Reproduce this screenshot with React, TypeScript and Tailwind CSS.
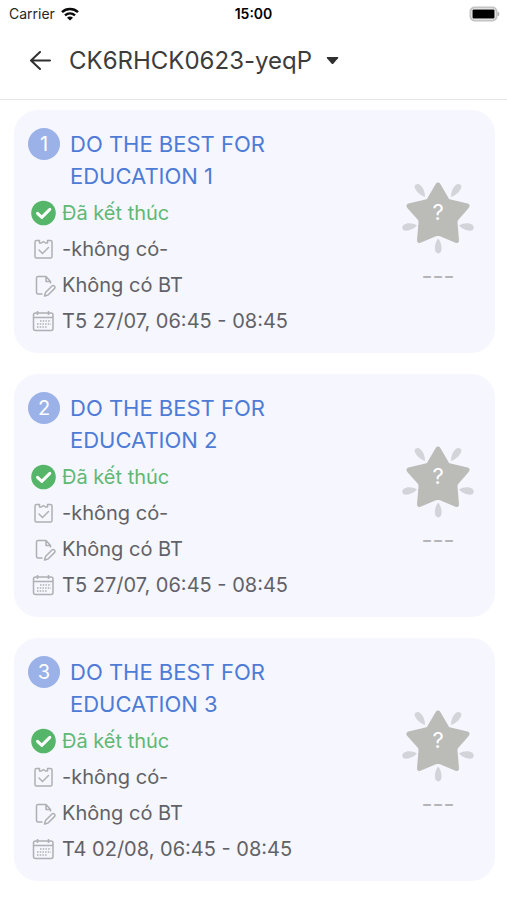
import { ReactNode } from "react";

type Lesson = {
  order: number;
  title: string;
  status: string;
  test: string;
  homework: string;
  time: string;
};

const lessons: Lesson[] = [
  { order: 1, title: "DO THE BEST FOR EDUCATION 1", status: "Đã kết thúc", test: "-không có-", homework: "Không có BT", time: "T5 27/07, 06:45 - 08:45" },
  { order: 2, title: "DO THE BEST FOR EDUCATION 2", status: "Đã kết thúc", test: "-không có-", homework: "Không có BT", time: "T5 27/07, 06:45 - 08:45" },
  { order: 3, title: "DO THE BEST FOR EDUCATION 3", status: "Đã kết thúc", test: "-không có-", homework: "Không có BT", time: "T4 02/08, 06:45 - 08:45" },
];

function WifiIcon() {
  return (
    <svg width="18" height="14" viewBox="0 0 18 14" fill="none" stroke="#0a0a0a" strokeWidth="2.5" aria-hidden="true">
      <path d="M1 5.2C5.5 1 12.5 1 17 5.2" />
      <path d="M4 8.4C7 5.7 11 5.7 14 8.4" />
      <path d="M9 13.6L6 10.7C7.8 9.2 10.2 9.2 12 10.7Z" fill="#0a0a0a" stroke="none" />
    </svg>
  );
}

function BatteryIcon() {
  return (
    <svg width="32" height="16" viewBox="0 0 32 16" aria-hidden="true">
      <rect x="2.5" y="1.5" width="26" height="13" rx="4" fill="#fff" stroke="#c4c4c4" strokeWidth="2" />
      <rect x="4.5" y="3.5" width="22" height="9" rx="1" fill="#000" />
      <path d="M29.500 5.500C32 6.500 32 9.500 29.500 10.500Z" fill="#b0b0b0" />
    </svg>
  );
}

function BackIcon() {
  return (
    <svg width="22" height="20" viewBox="0 0 22 20" fill="none" stroke="#303030" strokeWidth="2" strokeLinecap="round" strokeLinejoin="round" aria-hidden="true">
      <path d="M21 9.500H2M11 1L2 9.500L11 18" />
    </svg>
  );
}

function DoneIcon() {
  return (
    <svg width="26" height="26" viewBox="0 0 26 26" fill="none" aria-hidden="true">
      <circle cx="13.500" cy="13" r="12.300" fill="#55b568" />
      <path d="M7.500 13.300L11.800 17.400L19.800 9.400" stroke="#fff" strokeWidth="3" strokeLinecap="round" strokeLinejoin="round" />
    </svg>
  );
}

function TestIcon() {
  return (
    <svg width="26" height="26" viewBox="0 0 26 26" fill="none" stroke="#b0b0b3" strokeWidth="1.500" strokeLinecap="round" strokeLinejoin="round" aria-hidden="true">
      <path d="M9.500 4.500H6.500Q5 4.500 5 6V20.500Q5 22 6.500 22H20.500Q22 22 22 20.500V6Q22 4.500 20.500 4.500H17.500V7H15.500L13.500 5.500L11.500 7H9.500Z" />
      <path d="M9 14L12.500 17.500L18.500 11.500" />
    </svg>
  );
}

function HomeworkIcon() {
  return (
    <svg width="26" height="26" viewBox="0 0 26 26" fill="none" stroke="#b0b0b3" strokeWidth="1.500" strokeLinecap="round" strokeLinejoin="round" aria-hidden="true">
      <path d="M12 22H8Q6.500 22 6.500 20.500V6Q6.500 4.500 8 4.500H16L20.500 9.500V11M16 4.500V9.500H20.500" />
      <path d="M14.500 24L15.500 20.500L22 14Q23.500 13 24.500 14.200Q25.500 15.400 24.500 16.600L18 23Z" />
    </svg>
  );
}

function CalendarIcon() {
  return (
    <svg width="26" height="26" viewBox="0 0 26 26" fill="none" stroke="#b0b0b3" strokeWidth="1.500" aria-hidden="true">
      <rect x="3.500" y="5" width="19.500" height="17.500" rx="2" />
      <path d="M3.500 9.500H23M7.500 3V7M18.500 3V7" />
      <path d="M10 13H21M7 16H21M7 19H17" strokeWidth="1.500" strokeDasharray="1.500 1.200" />
    </svg>
  );
}

function StarBadge() {
  return (
    <div className="relative h-[76px] w-[76px]">
      <svg width="76" height="76" viewBox="0 0 76 76" aria-hidden="true">
        <path
          d="M38 5L46.500 19.500Q47.500 21.500 50 22L67 26L56.500 38Q54.800 40 55 42.500L56.500 60.500L41 54Q38 52.800 35 54L19.500 60.500L21 42.500Q21.200 40 19.500 38L9 26L26 22Q28.500 21.500 29.500 19.500Z"
          fill="#bbbbb8"
          stroke="#bbbbb8"
          strokeWidth="5"
          strokeLinejoin="round"
        />
        <g fill="#d3d4da">
          <path d="M25 17C20 15.500 15 10.500 14.500 6.500Q15 3.500 18.500 4C22.500 5.500 25 11.500 25 17Z" />
          <path d="M51 17C56 15.500 61 10.500 61.500 6.500Q61 3.500 57.500 4C53.500 5.500 51 11.500 51 17Z" />
          <path d="M17 45.500C13 50 7 51.500 3.500 50.200Q1 47.500 3.500 45C7 42.500 13 43 17 45.500Z" />
          <path d="M59 45.500C63 50 69 51.500 72.500 50.200Q75 47.500 72.500 45C69 42.500 63 43 59 45.500Z" />
          <path d="M38.200 58.500C35 62.500 34.200 68 35.500 71.500Q38.200 75.500 41 71.500C42.200 68 41.500 62.500 38.200 58.500Z" />
        </g>
      </svg>
      <span className="absolute inset-x-0 top-4 text-center text-[22px] leading-8 text-white">?</span>
    </div>
  );
}

function InfoRow({ icon, children, done = false }: { icon: ReactNode; children: ReactNode; done?: boolean }) {
  return (
    <li className={`flex h-9 items-center gap-[6px] ${done ? "text-[#5fb873]" : "text-[#626266]"}`}>
      {icon}
      <span>{children}</span>
    </li>
  );
}

function LessonCard({ lesson }: { lesson: Lesson }) {
  return (
    <article className="flex items-center justify-between rounded-3xl bg-[#f5f6fe] pt-[18px] pr-[19px] pb-[14px] pl-[14px]">
      <div>
        <div className="flex items-start gap-[10px]">
          <span className="flex size-8 shrink-0 items-center justify-center rounded-full bg-[#9bb2e8] text-xl text-white">
            {lesson.order}
          </span>
          <h2 className="max-w-56 text-[22px] leading-8 text-[#4d7bd6]">{lesson.title}</h2>
        </div>
        <ul className="mt-[3px] ml-[2px] text-xl">
          <InfoRow icon={<DoneIcon />} done>{lesson.status}</InfoRow>
          <InfoRow icon={<TestIcon />}>{lesson.test}</InfoRow>
          <InfoRow icon={<HomeworkIcon />}>{lesson.homework}</InfoRow>
          <InfoRow icon={<CalendarIcon />}>{lesson.time}</InfoRow>
        </ul>
      </div>
      <div className="flex flex-col items-center gap-1 pt-1">
        <StarBadge />
        <span className="text-2xl leading-8 text-[#b5b5b8]">---</span>
      </div>
    </article>
  );
}

export default function App() {
  return (
    <div className="min-h-screen bg-white font-['Inter',sans-serif]">
      <div className="grid h-7 grid-cols-3 items-center px-[7px] text-sm text-[#262626]">
        <div className="flex items-center gap-[6px] pl-[2px]">
          <span>Carrier</span>
          <WifiIcon />
        </div>
        <time className="text-center font-semibold text-black">15:00</time>
        <div className="flex justify-end">
          <BatteryIcon />
        </div>
      </div>
      <header className="flex h-[72px] items-center border-b border-[#e6e6e8] pb-[6px] pl-[29px]">
        <button type="button" aria-label="Back" className="mr-[18px]">
          <BackIcon />
        </button>
        <button type="button" className="flex items-center gap-[14px] text-2xl text-[#3c3c3c]">
          CK6RHCK0623-yeqP
          <svg width="13" height="9" viewBox="0 0 13 9" fill="#303030" aria-hidden="true">
            <path d="M1.500 1H11.500Q13 1 12 2.200L7.500 7.500Q6.500 8.500 5.500 7.500L1 2.200Q0 1 1.500 1Z" />
          </svg>
        </button>
      </header>
      <main className="flex flex-col gap-[21px] pt-[10px] pr-3 pb-5 pl-[14px]">
        {lessons.map((lesson) => (
          <LessonCard key={lesson.order} lesson={lesson} />
        ))}
      </main>
    </div>
  );
}
